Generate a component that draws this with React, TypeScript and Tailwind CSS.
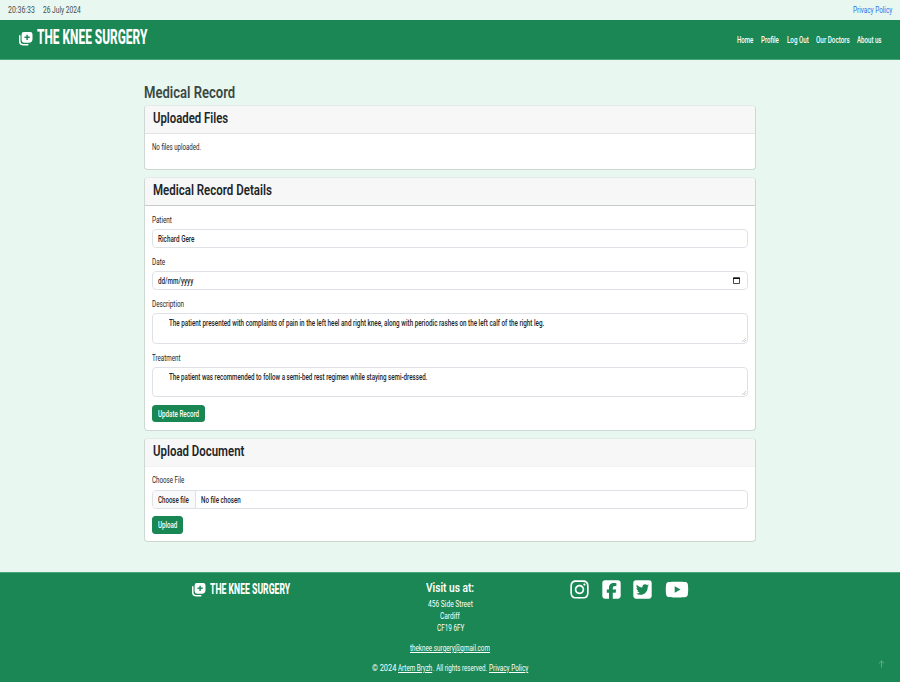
import React, { useLayoutEffect, useRef, useState } from "react";
import { FaInstagram, FaSquareFacebook, FaSquareTwitter, FaYoutube } from "react-icons/fa6";

/** Condensed text: squeezes its glyphs horizontally to the given width. */
function T({ w, c = "", children }: { w: number; c?: string; children: string }) {
  const ref = useRef<HTMLSpanElement>(null);
  const [k, setK] = useState(0.7);
  useLayoutEffect(() => {
    if (ref.current) setK(w / ref.current.offsetWidth);
  }, [w, children]);
  return (
    <span className="inline-flex shrink-0 whitespace-nowrap" style={{ width: w }}>
      <span ref={ref} className={`inline-block shrink-0 origin-left ${c}`} style={{ transform: `scaleX(${k})` }}>
        {children}
      </span>
    </span>
  );
}

function LogoIcon({ className }: { className: string }) {
  return (
    <svg viewBox="0 0 26 26" className={className} fill="none">
      <path d="M1.500 7v11.500a6 6 0 0 0 6 6H17" stroke="currentColor" strokeWidth="2.800" strokeLinecap="round" />
      <path
        fillRule="evenodd"
        fill="currentColor"
        d="M9.500 0h12A4.500 4.500 0 0 1 26 4.500v9a7 7 0 0 1-7 7H9.500A4.500 4.500 0 0 1 5 16V4.500A4.500 4.500 0 0 1 9.500 0zM14.200 5.300v3.600h-3.600v2.800h3.600v3.600H17v-3.600h3.600V8.900H17V5.300z"
      />
    </svg>
  );
}

function Card({ title, w, head, className, children }: { title: string; w: number; head: string; className: string; children: React.ReactNode }) {
  return (
    <section className={`flex flex-col overflow-hidden rounded-[4px] border border-[#ced8d3] border-t-[#e3eae7] bg-white ${className}`}>
      <div className={`flex shrink-0 items-center border-b bg-[#f7f7f7] px-[7.500px] pb-[2px] text-[15px] leading-none font-semibold text-[#212529] ${head}`}>
        <T w={w}>{title}</T>
      </div>
      <div className="flex flex-col items-start px-[7px]">{children}</div>
    </section>
  );
}

function Label({ w, children }: { w: number; children: string }) {
  return (
    <label className="flex h-[12px] items-center text-[#212529]">
      <T w={w}>{children}</T>
    </label>
  );
}

const box = "flex w-full rounded-[4px] border border-[#dee2e6] bg-white px-[5.400px] text-[#212529] font-medium";

function Grip() {
  return (
    <svg viewBox="0 0 5 5" className="mb-px -mr-[4px] ml-auto h-[4px] w-[4px] self-end" stroke="#999" strokeWidth=".6">
      <path d="M0 5 5 0M2.500 5 5 2.500" />
    </svg>
  );
}

export default function App() {
  return (
    <div className="flex h-[682px] w-[900px] flex-col overflow-hidden bg-[#e8f7f0] font-[Roboto,sans-serif] text-[8.500px] leading-[12px]">
      <div className="flex h-[20px] shrink-0 items-center pr-[7.600px] pl-[7.600px] text-[#454c49]">
        <T w={27}>20:36:33</T>
        <span className="w-[8px]" />
        <T w={37.5}>26 July 2024</T>
        <a className="ml-auto flex text-[#2c74ee]">
          <T w={39}>Privacy Policy</T>
        </a>
      </div>
      <header className="flex h-[40px] shrink-0 items-center border-b border-[#4ba37b] bg-[#1a8754] pr-[18.500px] pl-[19px] text-white">
        <LogoIcon className="mt-[-1px] h-[13.500px] w-[13.500px]" />
        <span className="mt-[-3px] ml-[4px] flex text-[19.500px] leading-none font-extrabold">
          <T w={110.5}>THE KNEE SURGERY</T>
        </span>
        <nav className="ml-auto flex gap-[7.500px] font-medium">
          <T w={16.5}>Home</T>
          <T w={18}>Profile</T>
          <T w={22}>Log Out</T>
          <T w={33.5}>Our Doctors</T>
          <T w={24.5}>About us</T>
        </nav>
      </header>

      <main className="flex flex-1 flex-col px-[144px] pt-[24px]">
        <h1 className="flex h-[17px] shrink-0 items-center text-[17px] leading-none font-semibold text-[#3b4843]">
          <T w={91.5}>Medical Record</T>
        </h1>
        <div className="h-[4px] shrink-0" />
        <Card title="Uploaded Files" w={75} head="h-[28px] border-[#e3e4e4]" className="h-[65px] shrink-0">
          <div className="mt-[7px] flex h-[12px] items-center text-[#212529]">
            <T w={49}>No files uploaded.</T>
          </div>
        </Card>
        <Card title="Medical Record Details" w={119} head="h-[28px] border-[#c4cbc8]" className="mt-[7px] h-[254px] shrink-0">
          <div className="h-[8px]" />
          <Label w={20}>Patient</Label>
          <div className={`${box} mt-[3px] h-[19px] items-center`}>
            <T w={36.5}>Richard Gere</T>
          </div>
          <div className="h-[8px]" />
          <Label w={13.5}>Date</Label>
          <div className={`${box} mt-[3px] h-[19px] items-center`}>
            <T w={35.5}>dd/mm/yyyy</T>
            <svg viewBox="0 0 7 7" className="mr-[1.600px] ml-auto h-[7px] w-[7px]" fill="none">
              <path d="M.5 1v5.500h6V1z" stroke="#333" strokeWidth=".9" />
              <path d="M0 .4h7v1.500H0z" fill="#111" />
            </svg>
          </div>
          <div className="h-[8px]" />
          <Label w={32}>Description</Label>
          <div className={`${box} mt-[3px] h-[31px] pt-[3px] pl-[16px]`}>
            <T w={375.5}>The patient presented with complaints of pain in the left heel and right knee, along with periodic rashes on the left calf of the right leg.</T>
            <Grip />
          </div>
          <div className="h-[8px]" />
          <Label w={28.5}>Treatment</Label>
          <div className={`${box} mt-[3px] h-[30px] pt-[3px] pl-[16px]`}>
            <T w={258.5}>The patient was recommended to follow a semi-bed rest regimen while staying semi-dressed.</T>
            <Grip />
          </div>
          <button className="mt-[8px] flex h-[17px] w-[53px] items-center justify-center rounded-[3.500px] bg-[#198754] font-medium text-white">
            <T w={41}>Update Record</T>
          </button>
        </Card>
        <Card title="Upload Document" w={91.5} head="h-[28px] border-[#f1f2f2]" className="mt-[7px] h-[104px] shrink-0">
          <div className="h-[7px]" />
          <Label w={32}>Choose File</Label>
          <div className={`${box} mt-[4px] h-[19px] items-center`}>
            <span className="-ml-[5.400px] flex h-full items-center rounded-l-[3px] border-r border-[#dee2e6] bg-[#f8f9fa] px-[5.400px]">
              <T w={31}>Choose file</T>
            </span>
            <span className="ml-[5px] flex">
              <T w={39.5}>No file chosen</T>
            </span>
          </div>
          <button className="mt-[7px] flex h-[18px] w-[31px] items-center justify-center rounded-[3.500px] bg-[#198754] font-medium text-white">
            <T w={19.5}>Upload</T>
          </button>
        </Card>
      </main>

      <footer className="relative h-[110px] shrink-0 border-t border-[#4ba37b] bg-[#1a8754] text-white">
        <div className="flex items-start pl-[192px]">
          <div className="mt-[9.500px] flex w-[180px] items-center">
            <LogoIcon className="h-[13.500px] w-[13.500px]" />
            <span className="ml-[4px] flex text-[14.500px] leading-none font-extrabold">
              <T w={80}>THE KNEE SURGERY</T>
            </span>
          </div>
          <div className="flex w-[156px] flex-col items-center pt-[9px]">
            <h2 className="flex text-[12.500px] font-semibold">
              <T w={48}>Visit us at:</T>
            </h2>
            <div className="mt-[4px] flex flex-col items-center">
              <T w={44.5}>456 Side Street</T>
              <T w={20}>Cardiff</T>
              <T w={27}>CF19 6FY</T>
            </div>
            <a className="mt-[8px] flex underline">
              <T w={80}>theknee.surgery@gmail.com</T>
            </a>
          </div>
          <div className="mt-[6px] ml-[42px] flex">
            <FaInstagram className="h-[21px] w-[19px]" />
            <FaSquareFacebook className="ml-[12.500px] h-[21px] w-[19px]" />
            <FaSquareTwitter className="ml-[12.500px] h-[21px] w-[19px]" />
            <FaYoutube className="ml-[12.500px] h-[21px] w-[24px]" />
          </div>
        </div>
        <p className="mt-[8px] flex justify-center">
          <T w={24.5}>© 2024</T>
          <a className="ml-[2px] flex underline">
            <T w={34.5}>Artem Bryzh</T>
          </a>
          <T w={54.5}>. All rights reserved.</T>
          <a className="ml-[2px] flex underline">
            <T w={39}>Privacy Policy</T>
          </a>
        </p>
        <svg viewBox="0 0 7 8" className="absolute right-[15.500px] bottom-[14.500px] h-[8px] w-[7px]" fill="none" stroke="#69b08e" strokeWidth=".9">
          <path d="M3.500 7.500V1M.7 3.600 3.500.9l2.800 2.700" />
        </svg>
      </footer>
    </div>
  );
}
